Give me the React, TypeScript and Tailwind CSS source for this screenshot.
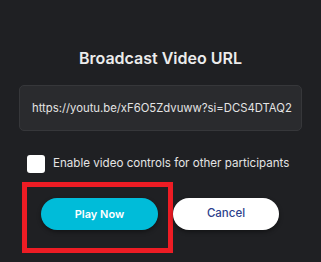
import React from "react";

export default function App() {
  return (
    <div
      className="w-[321px] h-[262px] bg-[#1f2023] overflow-hidden flex flex-col"
      style={{ fontFamily: "Inter, 'Noto Sans', sans-serif" }}
    >
      <div className="pt-[47px] h-[85px] text-center text-[16px] font-semibold text-[#ececec] leading-[22px]">
        Broadcast Video URL
      </div>
      <div className="mx-[19px] h-[46px] rounded-[5px] bg-[#2a2b2e] border border-[#36373a] flex items-center pl-[12px] pr-[12px]">
        <span className="text-[11.3px] text-[#e4e4e4] whitespace-nowrap">
          https://youtu.be/xF6O5Zdvuww?si=DCS4DTAQ2
        </span>
      </div>
      <div className="mt-[24px] ml-[27px] flex items-center gap-[8px] h-[18px]">
        <div className="w-[18px] h-[18px] rounded-[3px] bg-white" />
        <span className="text-[11.6px] text-[#e4e4e4] whitespace-nowrap">
          Enable video controls for other participants
        </span>
      </div>
      <div className="mt-[9px] flex items-start">
        <div className="ml-[22px] w-[151px] h-[71px] border-[5px] border-[#ed1c24] pl-[14px] pt-[11px]">
          <button className="w-[117px] h-[32px] rounded-full bg-[#00bcd9] text-white text-[11px] font-semibold shadow-[0_2px_4px_rgba(0,0,0,0.4)]">
            Play Now
          </button>
        </div>
        <button className="mt-[16px] w-[106px] h-[32px] rounded-full bg-white text-[#2c3f8c] text-[11.5px] font-medium shadow-[0_2px_4px_rgba(0,0,0,0.4)]">
          Cancel
        </button>
      </div>
    </div>
  );
}
